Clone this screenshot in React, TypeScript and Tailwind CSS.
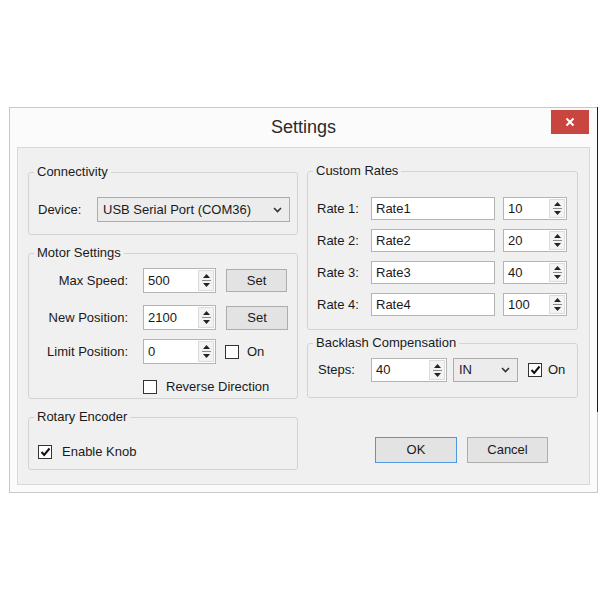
import type { ReactNode } from 'react';

function Group({ title, className, children }: { title: string; className: string; children: ReactNode }) {
  return (
    <fieldset className={`border border-[#d3d3d3] rounded-[3px] ${className}`}>
      <legend className="ml-[5px] px-[3px] leading-[16px]">{title}</legend>
      {children}
    </fieldset>
  );
}

function Spin({ value, className }: { value: string; className: string }) {
  return (
    <div className={`flex border border-[#b4b4b4] bg-white ${className}`}>
      <div className="flex-1 flex items-center pl-[4px]">{value}</div>
      <div className="w-[16px] my-[1px] mr-[1px] flex flex-col items-center justify-center gap-[2px] border border-[#dcdcdc] bg-[#f3f3f3]">
        <svg width="7" height="4" viewBox="0 0 7 4"><path d="M0 4 L3.5 0 L7 4 Z" fill="#222" /></svg>
        <div className="w-[9px] h-px bg-[#8a8a8a]" />
        <svg width="7" height="4" viewBox="0 0 7 4"><path d="M0 0 L7 0 L3.5 4 Z" fill="#222" /></svg>
      </div>
    </div>
  );
}

function Combo({ value, className }: { value: string; className: string }) {
  return (
    <div className={`flex items-center justify-between border border-[#acacac] bg-[#ececec] pl-[5px] pr-[7px] ${className}`}>
      <span>{value}</span>
      <svg width="9" height="6" viewBox="0 0 9 6"><path d="M1 1 L4.5 4.5 L8 1" fill="none" stroke="#333" strokeWidth="1.6" /></svg>
    </div>
  );
}

function Check({ checked }: { checked?: boolean }) {
  return (
    <div className="w-[14px] h-[14px] border border-[#333] bg-white flex items-center justify-center shrink-0">
      {checked && (
        <svg width="11" height="10" viewBox="0 0 11 10"><path d="M1.5 5 L4.2 8 L9.5 1.5" fill="none" stroke="#111" strokeWidth="2" /></svg>
      )}
    </div>
  );
}

function Btn({ label, className }: { label: string; className: string }) {
  return (
    <div className={`flex items-center justify-center border bg-[#e3e3e3] ${className}`}>{label}</div>
  );
}

function TextBox({ value }: { value: string }) {
  return <div className="w-[124px] h-[23px] border border-[#b4b4b4] bg-white flex items-center pl-[4px]">{value}</div>;
}

export default function App() {
  const rates = [
    ['Rate 1:', 'Rate1', '10'],
    ['Rate 2:', 'Rate2', '20'],
    ['Rate 3:', 'Rate3', '40'],
    ['Rate 4:', 'Rate4', '100'],
  ];

  return (
    <div className="w-[600px] h-[600px] bg-white pt-[107px] pl-[9px] font-['Liberation_Sans',Arial,sans-serif] text-[13px] text-[#1a1a1a]">
      {/* dialog window */}
      <div className="relative w-[589px] h-[386px] border border-[#c8c8c8] bg-[#fbfbfb] flex flex-col px-[7px] pb-[7px]">
        <div className="absolute right-[-1px] top-[-1px] w-px h-[305px] bg-[#1a1a1a]" />

        {/* title bar */}
        <div className="relative h-[39px] flex items-center justify-center">
          <span className="text-[18px] text-[#2a2a2a]">Settings</span>
          <div className="absolute right-[1px] top-[2px] w-[38px] h-[24px] bg-[#c9453f] flex items-center justify-center">
            <svg width="10" height="10" viewBox="0 0 10 10"><path d="M1.5 1.5 L8.5 8.5 M8.5 1.5 L1.5 8.5" stroke="#fff" strokeWidth="2" /></svg>
          </div>
        </div>

        {/* client area */}
        <div className="flex-1 border border-[#d9d9d9] bg-[#f0f0f0] flex gap-[9px] pl-[10px] pr-[11px] pt-[15px]">
          {/* left column */}
          <div className="w-[270px] flex flex-col gap-[10px] mt-[1px]">
            <Group title="Connectivity" className="h-[71px]">
              <div className="flex items-center mt-[17px] pl-[9px]">
                <span className="w-[59px]">Device:</span>
                <Combo value="USB Serial Port (COM36)" className="w-[193px] h-[25px]" />
              </div>
            </Group>

            <Group title="Motor Settings" className="h-[154px]">
              <div className="flex flex-col mt-[7px]">
                <div className="flex items-center">
                  <span className="w-[99px] text-right">Max Speed:</span>
                  <Spin value="500" className="ml-[15px] w-[73px] h-[25px]" />
                  <Btn label="Set" className="ml-[10px] w-[61px] h-[23px] border-[#adadad]" />
                </div>
                <div className="flex items-center mt-[12px]">
                  <span className="w-[99px] text-right">New Position:</span>
                  <Spin value="2100" className="ml-[15px] w-[73px] h-[25px]" />
                  <Btn label="Set" className="ml-[10px] w-[62px] h-[24px] border-[#adadad]" />
                </div>
                <div className="flex items-center mt-[9px]">
                  <span className="w-[99px] text-right">Limit Position:</span>
                  <Spin value="0" className="ml-[15px] w-[73px] h-[25px]" />
                  <div className="ml-[9px]"><Check /></div>
                  <span className="ml-[8px]">On</span>
                </div>
                <div className="flex items-center mt-[13px] ml-[114px]">
                  <Check />
                  <span className="ml-[9px]">Reverse Direction</span>
                </div>
              </div>
            </Group>

            <Group title="Rotary Encoder" className="h-[61px]">
              <div className="flex items-center mt-[17px] ml-[9px]">
                <Check checked />
                <span className="ml-[10px]">Enable Knob</span>
              </div>
            </Group>
          </div>

          {/* right column */}
          <div className="w-[271px] flex flex-col">
            <Group title="Custom Rates" className="h-[167px]">
              <div className="flex flex-col gap-[9px] mt-[18px] ml-[9px]">
                {rates.map(([label, name, val]) => (
                  <div key={label} className="flex items-center">
                    <span className="w-[54px]">{label}</span>
                    <TextBox value={name} />
                    <Spin value={val} className="ml-[8px] w-[64px] h-[23px]" />
                  </div>
                ))}
              </div>
            </Group>

            <Group title="Backlash Compensation" className="h-[63px] mt-[5px]">
              <div className="flex items-center mt-[7px] ml-[10px]">
                <span className="w-[53px]">Steps:</span>
                <Spin value="40" className="w-[76px] h-[24px]" />
                <Combo value="IN" className="ml-[6px] w-[65px] h-[24px]" />
                <div className="ml-[10px]"><Check checked /></div>
                <span className="ml-[6px]">On</span>
              </div>
            </Group>

            <div className="flex mt-[39px] ml-[68px] gap-[10px]">
              <Btn label="OK" className="w-[82px] h-[26px] border-[#4f97e0]" />
              <Btn label="Cancel" className="w-[81px] h-[26px] border-[#adadad]" />
            </div>
          </div>
        </div>
      </div>
    </div>
  );
}
